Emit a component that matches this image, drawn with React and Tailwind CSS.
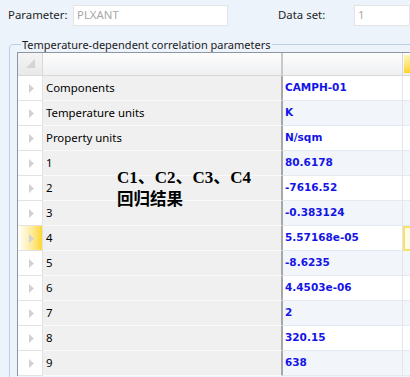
import React from 'react';

const rows = [
  ['Components', 'CAMPH-01'],
  ['Temperature units', 'K'],
  ['Property units', 'N/sqm'],
  ['1', '80.6178'],
  ['2', '-7616.52'],
  ['3', '-0.383124'],
  ['4', '5.57168e-05'],
  ['5', '-8.6235'],
  ['6', '4.4503e-06'],
  ['7', '2'],
  ['8', '320.15'],
  ['9', '638'],
];

function Arrow() {
  return (
    <svg width="6" height="9" viewBox="0 0 6 9">
      <polygon points="0,0 5,4.5 0,9" fill="#d2d2d2" />
    </svg>
  );
}

function Row({ name, value, index }) {
  const current = name === '4';
  const tinted = index % 2 === 1;
  return (
    <div className="grid grid-cols-[25px_240px_120px_1fr] h-[25px]">
      <div
        className={
          'flex items-center pl-[11px] border-r border-b border-[#e2e2e2] ' +
          (current ? 'bg-linear-to-r from-white to-[#ffd81a]' : 'bg-white')
        }
      >
        <Arrow />
      </div>
      <div className="flex items-center pl-[3px] bg-[#f0f0f0] border-r-2 border-r-[#a8a8a8] border-b border-b-[#fafafa] text-[11.4px] text-black">
        {name}
      </div>
      <div
        className={
          'flex items-center pl-[2px] border-r border-r-[#e2e6ea] border-b border-b-[#e4eaf1] text-[10.5px] font-bold text-[#1414e6] ' +
          (tinted ? 'bg-[#f2f6fb]' : 'bg-white')
        }
        style={{ fontFamily: '"DejaVu Sans", sans-serif' }}
      >
        {value}
      </div>
      <div
        className={
          current
            ? 'bg-[#fffde6] border-2 border-[#f8e26a]'
            : 'border-b border-b-[#e4eaf1] ' + (tinted ? 'bg-[#f2f6fb]' : 'bg-white')
        }
      />
    </div>
  );
}

export default function App() {
  return (
    <div
      className="relative w-[410px] h-[377px] overflow-hidden bg-[#edf3fb] text-[#1e1e1e]"
      style={{ fontFamily: '"Noto Sans", "Open Sans", sans-serif' }}
    >
      <div className="flex items-center h-[30px] pl-[8px] text-[11.4px]">
        <span className="w-[65px]">Parameter:</span>
        <div className="w-[155px] h-[21px] bg-white border border-[#e4e4e4] flex items-center pl-[3px] text-[#a8a8a8]">
          PLXANT
        </div>
        <span className="ml-[50px] w-[76px]">Data set:</span>
        <div className="flex-1 h-[21px] bg-white border border-[#e4e4e4] flex items-center pl-[3px] text-[#a8a8a8]">
          1
        </div>
      </div>

      <fieldset className="mt-[7px] ml-[9px] w-[420px] h-[400px] border border-[#b9cde4] rounded-tl-[4px] pl-[7px]">
        <legend className="ml-[4px] px-[1px] text-[11px] leading-[15px] text-[#1a1a1a]">
          Temperature-dependent correlation parameters
        </legend>

        <div className="border-t border-l border-[#8f969e]">
          <div className="grid grid-cols-[25px_240px_120px_1fr] h-[23px]">
            <div className="relative bg-linear-to-b from-[#f4f4f4] to-[#e9e9e9] border-r border-b border-[#d8d8d8]">
              <svg className="absolute right-[7px] bottom-[7px]" width="9" height="9" viewBox="0 0 9 9">
                <polygon points="9,0 9,9 0,9" fill="#d4d4d4" />
              </svg>
            </div>
            <div className="bg-linear-to-b from-[#fdfdfd] to-[#eff0f2] border-r-2 border-r-[#c8c8c8] border-b border-b-[#d8d8d8]" />
            <div className="bg-linear-to-b from-[#fdfdfd] to-[#eff0f2] border-r border-r-[#d8d8d8] border-b border-b-[#d8d8d8]" />
            <div className="bg-linear-to-b from-[#fdfdfd] to-[#eff0f2] border-b border-b-[#d8d8d8] pt-[2px] pl-[1px]">
              <div className="h-[18px] bg-linear-to-b from-[#fff7b0] to-[#ffd400]" />
            </div>
          </div>
          {rows.map(([name, value], i) => (
            <Row key={name} name={name} value={value} index={i} />
          ))}
        </div>
      </fieldset>

      <div className="absolute left-[117px] top-[169px] font-bold text-black">
        <div
          className="text-[17px] leading-[18px]"
          style={{ fontFamily: '"Liberation Serif", "Noto Sans CJK SC", serif' }}
        >
          C1、C2、C3、C4
        </div>
        <div
          className="mt-[2px] text-[16.5px] leading-[18px]"
          style={{ fontFamily: '"Noto Sans CJK SC", sans-serif' }}
        >
          回归结果
        </div>
      </div>
    </div>
  );
}
